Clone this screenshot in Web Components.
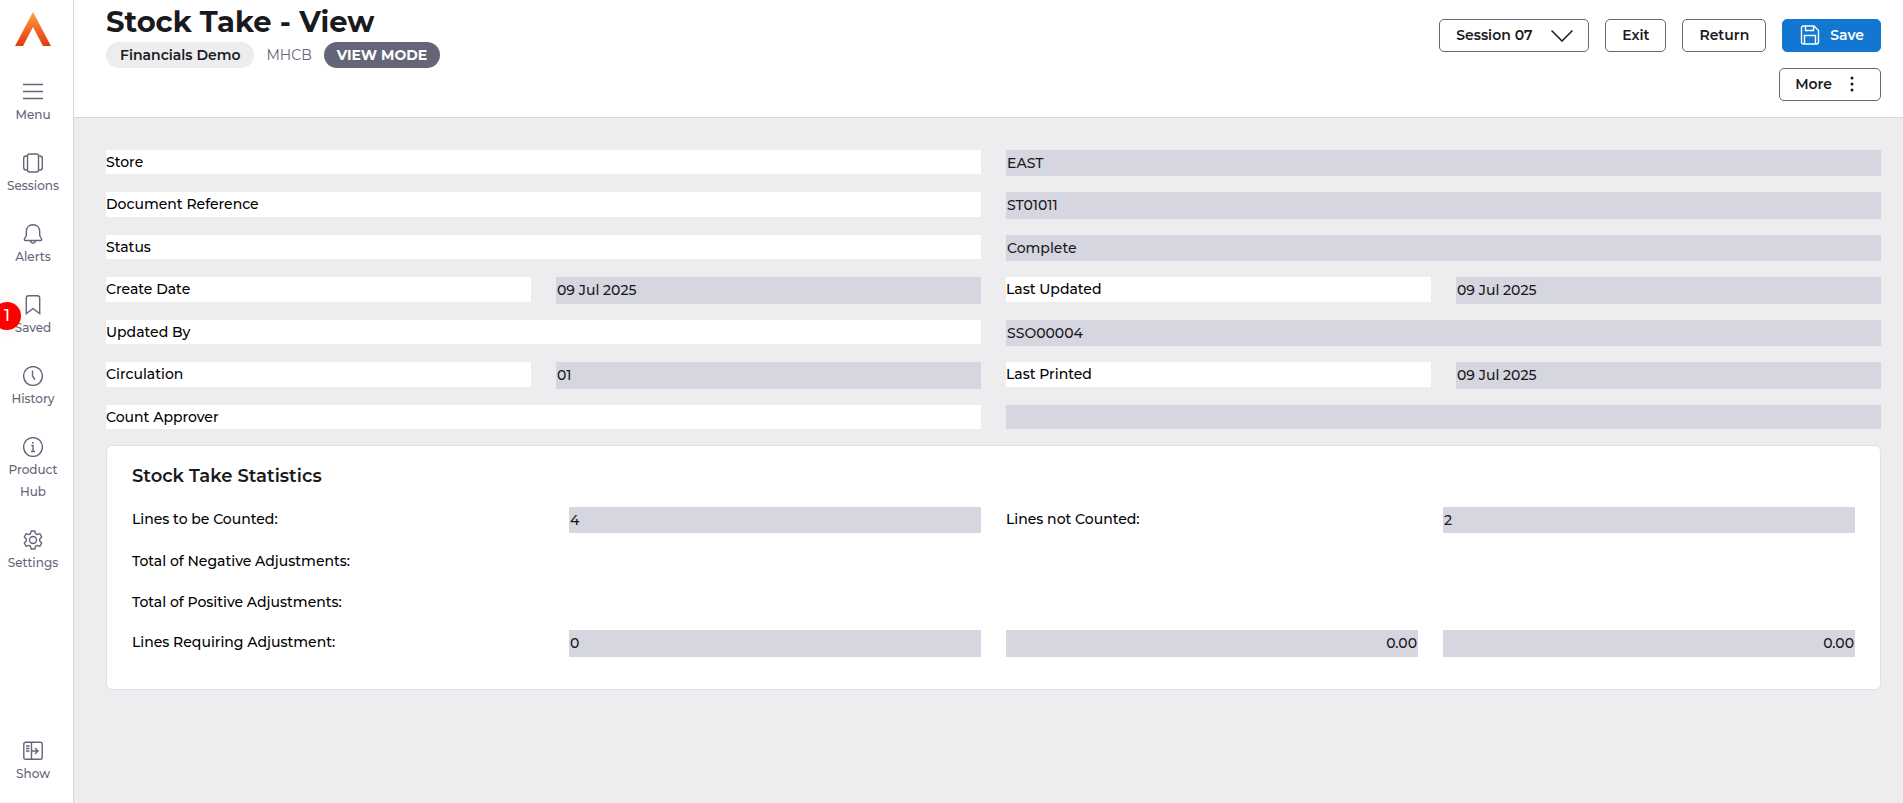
<!DOCTYPE html>
<html lang="en">
<head>
<meta charset="utf-8">
<title>Stock Take - View</title>
<style>
  :root {
    --ink: #1a1a1c;
    --muted: #656579;
    --line: #d6d6e0;
    --canvas: #ededf0;
    --primary: #1177d1;
  }
  body {
    margin: 0;
    font-family: Montserrat, Inter, "Open Sans", sans-serif;
    font-size: 14px;
    font-weight: 500;
    line-height: 24px;
    color: #000;
    background: var(--canvas);
  }
</style>
</head>
<body>
<app-shell>
  <nav-rail slot="nav">
    <nav-item icon="menu">Menu</nav-item>
    <nav-item icon="sessions">Sessions</nav-item>
    <nav-item icon="alerts">Alerts</nav-item>
    <nav-item icon="saved" badge="1">Saved</nav-item>
    <nav-item icon="history">History</nav-item>
    <nav-item icon="info">Product Hub</nav-item>
    <nav-item icon="settings">Settings</nav-item>
    <nav-item icon="show" slot="foot">Show</nav-item>
  </nav-rail>

  <page-header slot="header" heading="Stock Take - View">
    <info-chip slot="chips">Financials Demo</info-chip>
    <info-chip slot="chips" kind="plain">MHCB</info-chip>
    <info-chip slot="chips" kind="dark">VIEW MODE</info-chip>
    <session-select slot="actions" value="Session 07"></session-select>
    <action-button slot="actions">Exit</action-button>
    <action-button slot="actions">Return</action-button>
    <action-button slot="actions" kind="primary" icon="save">Save</action-button>
    <action-button slot="actions" kind="more" icon="dots">More</action-button>
  </page-header>

  <field-row><form-field wide label="Store" value="EAST"></form-field></field-row>
  <field-row><form-field wide label="Document Reference" value="ST01011"></form-field></field-row>
  <field-row><form-field wide label="Status" value="Complete"></form-field></field-row>
  <field-row>
    <form-field label="Create Date" value="09 Jul 2025"></form-field>
    <form-field label="Last Updated" value="09 Jul 2025"></form-field>
  </field-row>
  <field-row><form-field wide label="Updated By" value="SSO00004"></form-field></field-row>
  <field-row>
    <form-field label="Circulation" value="01"></form-field>
    <form-field label="Last Printed" value="09 Jul 2025"></form-field>
  </field-row>
  <field-row><form-field wide label="Count Approver" value=""></form-field></field-row>

  <stats-card heading="Stock Take Statistics">
    <field-row>
      <form-field plain label="Lines to be Counted:" value="4"></form-field>
      <form-field plain label="Lines not Counted:" value="2"></form-field>
    </field-row>
    <field-row><form-field plain label="Total of Negative Adjustments:"></form-field></field-row>
    <field-row><form-field plain label="Total of Positive Adjustments:"></form-field></field-row>
    <field-row><form-field plain label="Lines Requiring Adjustment:" value="0" amounts="0.00,0.00"></form-field></field-row>
  </stats-card>
</app-shell>

<script>
const ICONS = {
  menu: '<path d="M0 2.500h20M0 9.500h20M0 16.500h20"/>',
  sessions: '<rect x="4.5" y="1" width="11" height="18" rx="2"/><path d="M4.5 3H3Q.7 3 .7 5.500v9Q.7 17 3 17h1.500M15.500 3H17q2.300 0 2.300 2.500v9q0 2.500-2.300 2.500h-1.500"/>',
  alerts: '<path d="M10 .8c-4.200 0-6.700 3-6.700 7v3.500c0 1.500-2 2.600-2 4.200 0 .6.400 1 1 1h15.400c.6 0 1-.4 1-1 0-1.600-2-2.700-2-4.200V7.800c0-4-2.500-7-6.700-7zM7.500 17c.4 1.600 1.300 2.200 2.500 2.200s2.100-.6 2.500-2.200"/>',
  saved: '<path d="M3.300 18.500V3Q3.300.8 5.500.8h9q2.200 0 2.200 2.200v15.500L10 13.500z"/>',
  history: '<circle cx="10" cy="10" r="9.400"/><path d="M9.500 4.500V10l2.500 3.500"/>',
  info: '<circle cx="10" cy="10" r="9.400"/><path d="M8.300 8.500H10v6M8 14.500h4"/><path d="M9.800 5v1.500" stroke-width="1.600"/>',
  settings: '<circle cx="10" cy="10" r="3.500"/><path d="M8.100 1h3.800l.6 2.600 1.700 1 2.600-.9 1.900 3.300-2 1.900v2.200l2 1.900-1.900 3.300-2.600-.9-1.700 1-.6 2.600H8.100l-.6-2.600-1.700-1-2.600.9L1.300 13l2-1.900V8.900l-2-1.900 1.900-3.300 2.600.9 1.700-1z" stroke-linejoin="round"/>',
  show: '<rect x=".8" y="1.300" width="18.400" height="17" rx="1.800"/><path d="M8.500 1.300v17M3 5h3.500M3 7.500h3.500M3 10h3.500M8.500 10h6.200M12 7l3 3-3 3"/>',
  save: '<path d="M1.500 3q0-2 2-2h10.500l4.500 4.500V17q0 2-2 2h-13q-2 0-2-2zM5.500 1v4.500h8V1M4.500 19v-8.500h11V19"/>',
  dots: '<g fill="currentColor" stroke="none"><circle cx="10" cy="4" r="1.500"/><circle cx="10" cy="10" r="1.500"/><circle cx="10" cy="16" r="1.500"/></g>'
};

function icon(name) {
  return `<svg viewBox="0 0 20 20" width="20" height="20" fill="none" stroke="currentColor" stroke-width="1.400" aria-hidden="true">${ICONS[name]}</svg>`;
}

class AppShell extends HTMLElement {
  constructor() {
    super();
    this.attachShadow({ mode: "open" });
    this.shadowRoot.innerHTML = `
    <style>
      :host { display: grid; grid-template-columns: 74px 1fr; min-height: 100vh; }
      .page { display: flex; flex-direction: column; min-width: 0; }
      main { display: flex; flex-direction: column; gap: 16px; padding: 32px 22px 32px 32px; }
    </style>
    <slot name="nav"></slot>
    <div class="page">
      <slot name="header"></slot>
      <main><slot></slot></main>
    </div>
    `;
  }
}

class NavRail extends HTMLElement {
  constructor() {
    super();
    this.attachShadow({ mode: "open" });
    this.shadowRoot.innerHTML = `
    <style>
      :host { display: block; box-sizing: border-box; background: #fff; border-right: 1px solid var(--line); }
      nav {
        display: flex; flex-direction: column; align-items: center; gap: 27px;
        box-sizing: border-box; height: 100%; padding: 12px 7px 18px 0;
      }
      .logo { display: block; height: 43px; }
      .logo svg { display: block; }
      .foot { margin-top: auto; }
    </style>
    <nav>
      <a class="logo" href="#" aria-label="Home">
        <svg viewBox="0 0 36 34" width="36" height="34">
          <defs><linearGradient id="flame" x1="0" y1="0" x2="0" y2="1">
            <stop offset="0" stop-color="#fba63c"/><stop offset=".5" stop-color="#f26a2a"/><stop offset="1" stop-color="#e03a10"/>
          </linearGradient></defs>
          <path fill="url(#flame)" d="M18 0l18 34h-8L18 15 8 34H0z"/>
        </svg>
      </a>
      <slot></slot>
      <div class="foot"><slot name="foot"></slot></div>
    </nav>
    `;
  }
}

class NavItem extends HTMLElement {
  constructor() {
    super();
    this.attachShadow({ mode: "open" });
  }

  connectedCallback() {
    const badge = this.getAttribute("badge");
    this.shadowRoot.innerHTML = `
    <style>
      :host { display: block; position: relative; width: 66px; }
      a {
        display: flex; flex-direction: column; align-items: center; gap: 2px;
        color: var(--muted); font-size: 12px; line-height: 22px;
        text-align: center; text-decoration: none;
      }
      svg { display: block; }
      .badge {
        position: absolute; left: -7px; top: 7px; width: 28px; height: 28px;
        border-radius: 50%; background: #f00; color: #fff;
        box-shadow: 0 0 0 7px rgba(255, 0, 0, .02);
        font-size: 16px; line-height: 28px; text-align: center;
      }
    </style>
    <a href="#">${icon(this.getAttribute("icon"))}<span><slot></slot></span></a>
    ${badge ? `<span class="badge">${badge}</span>` : ""}
    `;
  }
}

class PageHeader extends HTMLElement {
  constructor() {
    super();
    this.attachShadow({ mode: "open" });
  }

  connectedCallback() {
    this.shadowRoot.innerHTML = `
    <style>
      :host { display: block; background: #fff; border-bottom: 1px solid var(--line); }
      header { display: flex; justify-content: space-between; padding: 0 22px 16px 32px; }
      h1 { margin: 0; padding-top: 2px; font-size: 29px; line-height: 40px; font-weight: 700; color: var(--ink); }
      .chips { display: flex; align-items: center; gap: 12px; }
      .actions {
        display: flex; flex-wrap: wrap; justify-content: flex-end; align-content: flex-start;
        gap: 16px; max-width: 480px; padding-top: 19px;
      }
    </style>
    <header>
      <div>
        <h1>${this.getAttribute("heading")}</h1>
        <div class="chips"><slot name="chips"></slot></div>
      </div>
      <div class="actions"><slot name="actions"></slot></div>
    </header>
    `;
  }
}

class InfoChip extends HTMLElement {
  constructor() {
    super();
    this.attachShadow({ mode: "open" });
    this.shadowRoot.innerHTML = `
    <style>
      :host {
        display: block; padding: 0 14px; border-radius: 13px;
        line-height: 26px; font-weight: 600;
        color: var(--ink); background: var(--canvas);
      }
      :host([kind="plain"]) { padding: 0; background: none; color: var(--muted); font-weight: 400; }
      :host([kind="dark"]) { padding: 0 13px; background: var(--muted); color: #fff; font-weight: 700; }
    </style>
    <slot></slot>
    `;
  }
}

class SessionSelect extends HTMLElement {
  constructor() {
    super();
    this.attachShadow({ mode: "open" });
  }

  connectedCallback() {
    this.shadowRoot.innerHTML = `
    <style>
      :host { display: grid; align-items: center; }
      select, svg { grid-area: 1 / 1; }
      select {
        appearance: none; box-sizing: border-box; width: 150px; height: 33px;
        padding: 0 48px 1px 16px; border: 1px solid var(--muted); border-radius: 5px;
        background: #fff; color: var(--ink); font: inherit; font-weight: 600;
      }
      svg { justify-self: end; margin-right: 16px; pointer-events: none; }
    </style>
    <select aria-label="Session"><option>${this.getAttribute("value")}</option></select>
    <svg viewBox="0 0 22 12" width="22" height="12" fill="none" stroke="#1a1a1c" stroke-width="1.500"><path d="M.5.500 11 11 21.500.500"/></svg>
    `;
  }
}

class ActionButton extends HTMLElement {
  constructor() {
    super();
    this.attachShadow({ mode: "open" });
  }

  connectedCallback() {
    const kind = this.getAttribute("kind");
    const name = this.getAttribute("icon");
    const glyph = name ? icon(name) : "";
    this.shadowRoot.innerHTML = `
    <style>
      :host { display: block; }
      button {
        display: flex; align-items: center; box-sizing: border-box; height: 33px;
        padding: 0 16px 1px; border: 1px solid var(--muted); border-radius: 5px;
        background: #fff; color: var(--ink); font: inherit; font-weight: 600;
      }
      .primary { gap: 10px; padding-left: 17px; background: var(--primary); border-color: var(--primary); color: #fff; }
      .more { gap: 10px; padding-left: 15px; padding-right: 18px; }
    </style>
    <button type="button" class="${kind || ""}">${kind === "more" ? "" : glyph}<slot></slot>${kind === "more" ? glyph : ""}</button>
    `;
  }
}

// A row of four equal columns; every other row is one pixel taller.
class FieldRow extends HTMLElement {
  constructor() {
    super();
    this.attachShadow({ mode: "open" });
    this.shadowRoot.innerHTML = `
    <style>
      :host {
        --label-height: 24px;
        display: grid; grid-template-columns: repeat(4, 1fr);
        column-gap: 25px; align-items: start;
      }
      :host(:nth-of-type(even)) { --label-height: 25px; }
    </style>
    <slot></slot>
    `;
  }
}

class FormField extends HTMLElement {
  constructor() {
    super();
    this.attachShadow({ mode: "open" });
  }

  connectedCallback() {
    const value = this.getAttribute("value");
    const amounts = (this.getAttribute("amounts") || "").split(",").filter(Boolean);
    const label = this.getAttribute("label");
    this.shadowRoot.innerHTML = `
    <style>
      :host { display: contents; }
      label { height: var(--label-height); line-height: 24px; background: #fff; }
      input {
        box-sizing: border-box; width: 100%; min-width: 0; margin: 0; border: 0; padding: 0 1px 1px;
        height: calc(var(--label-height) + 2px);
        background: var(--line); color: var(--ink); font: inherit; outline: 0;
      }
      input[value=""] { height: var(--label-height); }
      .amount { text-align: right; }
      :host([wide]) label, :host([wide]) input { grid-column: span 2; }
      :host([plain]) label { background: none; }
    </style>
    <label for="value">${label}</label>
    ${value === null ? "" : `<input id="value" readonly value="${value}">`}
    ${amounts.map((amount) => `<input class="amount" aria-label="${label}" readonly value="${amount}">`).join("")}
    `;
  }
}

class StatsCard extends HTMLElement {
  constructor() {
    super();
    this.attachShadow({ mode: "open" });
  }

  connectedCallback() {
    this.shadowRoot.innerHTML = `
    <style>
      :host { display: block; }
      section {
        display: flex; flex-direction: column; gap: 16px; padding: 16px 25px 32px;
        border: 1px solid #e0e0e6; border-radius: 6px; background: #fff;
      }
      h2 { margin: 0; padding-bottom: 1px; font-size: 18px; line-height: 28px; font-weight: 600; color: var(--ink); }
    </style>
    <section>
      <h2>${this.getAttribute("heading")}</h2>
      <slot></slot>
    </section>
    `;
  }
}

customElements.define("app-shell", AppShell);
customElements.define("nav-rail", NavRail);
customElements.define("nav-item", NavItem);
customElements.define("page-header", PageHeader);
customElements.define("info-chip", InfoChip);
customElements.define("session-select", SessionSelect);
customElements.define("action-button", ActionButton);
customElements.define("field-row", FieldRow);
customElements.define("form-field", FormField);
customElements.define("stats-card", StatsCard);
</script>
</body>
</html>
